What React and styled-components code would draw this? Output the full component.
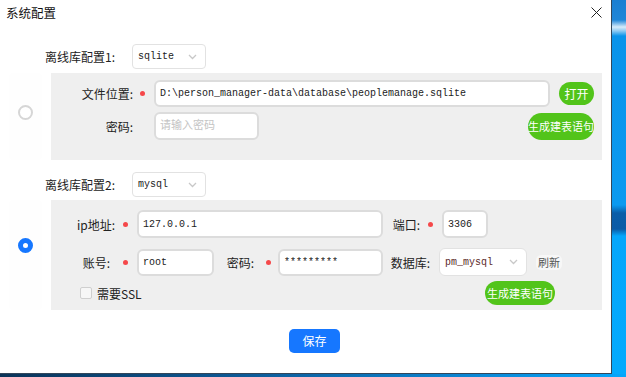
import React from 'react';
import styled, { createGlobalStyle } from 'styled-components';

const Global = createGlobalStyle`
  html, body {
    margin: 0;
    padding: 0;
  }
  body {
    width: 626px;
    height: 377px;
    overflow: hidden;
    font-family: "Noto Sans CJK SC", "Noto Sans", sans-serif;
    background:
      linear-gradient(180deg, #1b7fd2 0px, #1f86d8 20px, #d6ecfb 27px, #8cc9f2 31px, #0a93ea 36px, #0b9af0 205px, #0a5da8 213px, #0b5ba6 229px, #05a6fb 236px, #04aafd 377px);
  }
`;

const Desktop = styled.div`
  width: 626px;
  height: 377px;
  &::after {
    content: '';
    display: block;
    width: 626px;
    height: 3px;
    background: linear-gradient(90deg, #0a3358 0%, #0d5b99 40%, #0a86d4 75%, #05a6fb 100%);
  }
`;

const Window = styled.div`
  width: 611px;
  height: 373px;
  background: #fff;
  border-right: 1px solid #33475b;
  border-bottom: 1px solid #33475b;
  display: flex;
  flex-direction: column;
  color: #222;
`;

const TitleBar = styled.div`
  height: 26px;
  display: flex;
  align-items: center;
  justify-content: space-between;
  padding: 0 9px 0 6px;
`;

const Title = styled.span`
  font-size: 12.5px;
  color: #111;
  line-height: 1;
`;

const Close = styled.div`
  width: 12px;
  height: 12px;
  display: flex;
  align-items: center;
  justify-content: center;
  margin-top: -1px;
`;

const ConfigRow = styled.div`
  display: flex;
  align-items: center;
  margin-top: ${p => p.$mt}px;
  padding-left: 45px;
`;

const ConfigLabel = styled.span`
  width: 87px;
  font-size: 12px;
  color: #222;
`;

const SelectBox = styled.div`
  box-sizing: border-box;
  width: ${p => p.$w}px;
  height: ${p => p.$h}px;
  margin-left: ${p => p.$ml || 0}px;
  border: 1px solid #e2e2e2;
  border-radius: ${p => p.$r || 4}px;
  background: #fff;
  display: flex;
  align-items: center;
  justify-content: space-between;
  padding: 0 8px 0 5px;
  font-family: "Liberation Mono", "DejaVu Sans Mono", monospace;
  font-size: 10px;
  color: ${p => p.$color || '#222'};
`;

const PanelRow = styled.div`
  display: flex;
  margin-top: ${p => p.$mt}px;
  margin-right: 9px;
`;

const RadioCell = styled.div`
  width: 51px;
  display: flex;
  justify-content: center;
  padding-right: 6px;
  box-sizing: border-box;
`;

const RadioCard = styled.div`
  width: 33px;
  margin-left: 6px;
  border-radius: 4px;
  background: #fefefe;
  display: flex;
  align-items: center;
  justify-content: center;
  padding-bottom: ${p => p.$pb}px;
`;

const Radio = styled.span`
  box-sizing: border-box;
  width: 15px;
  height: 15px;
  border-radius: 50%;
  background: #fff;
  border: ${p => (p.$on ? '5px solid #1677ff' : '2px solid #d6d6d6')};
`;

const Panel = styled.div`
  flex: 1;
  background: #efefef;
  display: flex;
  flex-direction: column;
  gap: ${p => p.$gap}px;
  padding: ${p => p.$pad};
`;

const Row = styled.div`
  display: flex;
  align-items: center;
  margin-top: ${p => p.$mt || 0}px;
`;

const Label = styled.span`
  width: ${p => p.$w}px;
  margin-left: ${p => p.$ml || 0}px;
  flex-shrink: 0;
  text-align: right;
  font-size: 12px;
  color: #222;
  white-space: nowrap;
`;

const Dot = styled.span`
  width: 5px;
  height: 5px;
  border-radius: 50%;
  flex-shrink: 0;
  background: ${p => (p.$hide ? 'transparent' : '#f5484a')};
  margin: 0 ${p => (p.$mr === undefined ? 9 : p.$mr)}px 0 ${p => (p.$ml === undefined ? 8 : p.$ml)}px;
`;

const Input = styled.input`
  box-sizing: border-box;
  width: ${p => p.$w}px;
  height: ${p => p.$h || 27}px;
  flex-shrink: 0;
  border: 2px solid #dcdcdc;
  border-radius: 6px;
  background: #fff;
  padding: 0 0 0 4px;
  outline: none;
  font-family: "Liberation Mono", "DejaVu Sans Mono", monospace;
  font-size: 10px;
  color: #222;
  &::placeholder {
    font-family: "Noto Sans CJK SC", sans-serif;
    font-size: 11px;
    color: #c4c4c4;
  }
`;

const GreenButton = styled.button`
  box-sizing: border-box;
  width: ${p => p.$w}px;
  height: ${p => p.$h}px;
  margin-left: ${p => (p.$ml === undefined ? 'auto' : `${p.$ml}px`)};
  margin-right: ${p => p.$mr || 0}px;
  border: none;
  border-radius: 14px;
  background: #52c41a;
  color: #fff;
  padding: 0;
  font-family: "Noto Sans CJK SC", sans-serif;
  font-size: ${p => p.$fs}px;
  white-space: nowrap;
  flex-shrink: 0;
`;

const Refresh = styled.span`
  margin-left: 9px;
  width: 26px;
  height: 15px;
  border-radius: 5px;
  background: #f7f7f7;
  font-size: 11px;
  color: #555;
  display: flex;
  align-items: center;
  justify-content: center;
`;

const Check = styled.span`
  box-sizing: border-box;
  width: 12px;
  height: 12px;
  margin-left: 29px;
  border: 1.5px solid #cfcfcf;
  border-radius: 2px;
  background: #f6f6f6;
`;

const CheckText = styled.span`
  margin-left: 5px;
  font-size: 12px;
  color: #222;
`;

const Footer = styled.div`
  margin-top: 17px;
  padding-left: 289px;
`;

const SaveButton = styled.button`
  width: 51px;
  height: 24px;
  border: none;
  border-radius: 5px;
  background: #1677ff;
  color: #fff;
  padding: 0;
  font-family: "Noto Sans CJK SC", sans-serif;
  font-size: 12px;
`;

const Chevron = () => (
  <svg width="9" height="6" viewBox="0 0 9 6">
    <path d="M1 1 L4.5 4.5 L8 1" fill="none" stroke="#c8c8c8" strokeWidth="1.3" />
  </svg>
);

export default function App() {
  return (
    <Desktop>
      <Global />
      <Window>
        <TitleBar>
          <Title>系统配置</Title>
          <Close>
            <svg width="11" height="11" viewBox="0 0 11 11">
              <path d="M0.5 0.5 L10.5 10.5 M10.5 0.5 L0.5 10.5" stroke="#222" strokeWidth="1" />
            </svg>
          </Close>
        </TitleBar>

        <ConfigRow $mt={18}>
          <ConfigLabel>离线库配置1:</ConfigLabel>
          <SelectBox $w={74} $h={25}>
            <span>sqlite</span>
            <Chevron />
          </SelectBox>
        </ConfigRow>
        <PanelRow $mt={4}>
          <RadioCell>
            <RadioCard $pb={9}>
              <Radio />
            </RadioCard>
          </RadioCell>
          <Panel $gap={5} $pad="7px 8px 20px 0">
            <Row>
              <Label $w={82}>文件位置:</Label>
              <Dot $ml={7} />
              <Input $w={396} readOnly value="D:\person_manager-data\database\peoplemanage.sqlite" />
              <GreenButton $w={35} $h={23} $fs={12} $ml={9}>打开</GreenButton>
            </Row>
            <Row>
              <Label $w={82}>密码:</Label>
              <Dot $ml={7} $hide />
              <Input $w={105} $h={28} readOnly placeholder="请输入密码" />
              <GreenButton $w={66} $h={27} $fs={11}>生成建表语句</GreenButton>
            </Row>
          </Panel>
        </PanelRow>

        <ConfigRow $mt={12}>
          <ConfigLabel>离线库配置2:</ConfigLabel>
          <SelectBox $w={74} $h={25}>
            <span>mysql</span>
            <Chevron />
          </SelectBox>
        </ConfigRow>
        <PanelRow $mt={3}>
          <RadioCell>
            <RadioCard $pb={20}>
              <Radio $on />
            </RadioCard>
          </RadioCell>
          <Panel $gap={0} $pad="10px 0 5px 0">
            <Row>
              <Label $w={64}>ip地址:</Label>
              <Dot />
              <Input $w={246} $h={28} readOnly value="127.0.0.1" />
              <Label $w={28} $ml={9}>端口:</Label>
              <Dot />
              <Input $w={46} $h={28} readOnly value="3306" />
            </Row>
            <Row $mt={10}>
              <Label $w={59}>账号:</Label>
              <Dot $ml={13} />
              <Input $w={77} readOnly value="root" />
              <Label $w={28} $ml={12}>密码:</Label>
              <Dot $ml={12} $mr={7} />
              <Input $w={105} readOnly value="*********" />
              <Label $w={42} $ml={5}>数据库:</Label>
              <SelectBox $w={88} $h={28} $ml={9} $r={6} $color="#5b2a2a">
                <span>pm_mysql</span>
                <Chevron />
              </SelectBox>
              <Refresh>刷新</Refresh>
            </Row>
            <Row $mt={5}>
              <Check />
              <CheckText>需要SSL</CheckText>
              <GreenButton $w={70} $h={24} $fs={11} $mr={47}>生成建表语句</GreenButton>
            </Row>
          </Panel>
        </PanelRow>

        <Footer>
          <SaveButton>保存</SaveButton>
        </Footer>
      </Window>
    </Desktop>
  );
}
